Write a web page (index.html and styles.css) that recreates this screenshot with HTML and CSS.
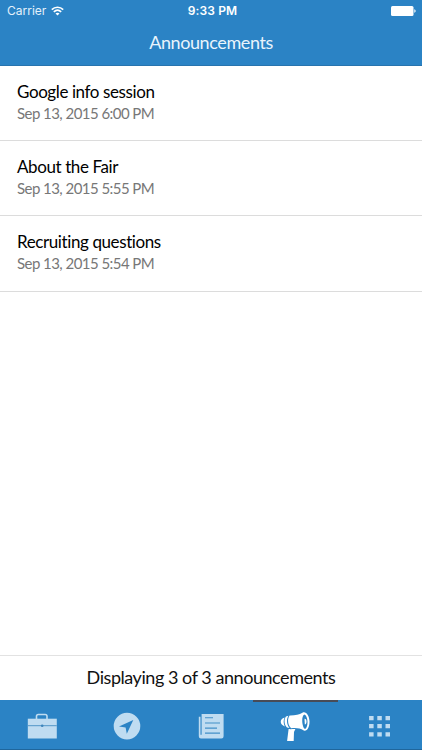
FILE: index.html
```html
<!DOCTYPE html>
<html lang="en">
<head>
    <meta charset="UTF-8">
    <meta name="viewport" content="width=device-width, initial-scale=1.0">
    <title>Announcements</title>
    <link rel="stylesheet" href="styles.css">
</head>
<body>
    <div class="app">
        <header class="header">
            <div class="status-bar">
                <div class="carrier">
                    <span>Carrier</span>
                    <svg class="wifi" width="13" height="10" viewBox="0 0 13 10" fill="none" stroke="#fff" stroke-width="1.6">
                        <path d="M0.8 3.6C4 0.4 9 0.4 12.2 3.6M2.8 5.9C5 3.8 8 3.8 10.2 5.9"/>
                        <path d="M6.5 9.4L4.5 7.4C5.6 6.4 7.4 6.4 8.5 7.4Z" fill="#fff" stroke="none"/>
                    </svg>
                </div>
                <div class="clock">9:33 PM</div>
                <svg class="battery" width="25" height="10" viewBox="0 0 25 10" fill="#fff">
                    <rect width="22.5" height="10" rx="1.5"/>
                    <path d="M23.3 3.3C25.1 3.8 25.1 6.2 23.3 6.7Z"/>
                </svg>
            </div>
            <h1>Announcements</h1>
        </header>

        <main class="announcements">
            <div class="announcement">
                <h2>Google info session</h2>
                <p>Sep 13, 2015 6:00 PM</p>
            </div>
            <div class="announcement">
                <h2>About the Fair</h2>
                <p>Sep 13, 2015 5:55 PM</p>
            </div>
            <div class="announcement">
                <h2>Recruiting questions</h2>
                <p>Sep 13, 2015 5:54 PM</p>
            </div>
        </main>

        <div class="summary">Displaying 3 of 3 announcements</div>

        <nav class="tab-bar">
            <a class="tab">
                <svg width="30" height="30" viewBox="0 0 30 30">
                    <path d="M9.5 7V4.3Q9.5 2.5 11.3 2.5H18.2Q20 2.5 20 4.3V7" fill="none" stroke="currentColor" stroke-width="1.6"/>
                    <path d="M.8 6.7H29.8V26.5H.8Z" fill="currentColor"/>
                    <path d="M.8 13.7H29.8" stroke="#5295c7" stroke-width="1"/>
                    <circle cx="15.2" cy="13.8" r="1.3" fill="#3e85bb"/>
                </svg>
            </a>
            <a class="tab">
                <svg width="30" height="30" viewBox="0 0 30 30">
                    <path fill="currentColor" fill-rule="evenodd" d="M15 .8A13.3 13.3 0 1 1 15 27.4A13.3 13.3 0 1 1 15 .8ZM21.3 7.9L7 14.5L13.6 15.6L14.8 21.8Z"/>
                </svg>
            </a>
            <a class="tab">
                <svg width="30" height="30" viewBox="0 0 30 30">
                    <path d="M5.6 2H27.6V24.3Q27.6 26.5 25.4 26.5H5Q2.8 26.5 2.8 24.3V4.8H4.5V22.8H5.6Z" fill="currentColor"/>
                    <path d="M9 5.8H17M9 11H24M9 16.1H21M9 21.1H24" stroke="#438fc8" stroke-width="1.1"/>
                </svg>
            </a>
            <a class="tab active">
                <svg width="30" height="30" viewBox="0 0 30 30" fill="currentColor">
                    <path fill-rule="evenodd" d="M9.6 3.4C15 3.5 19.2 2.6 22.4.7C26 -1.2 29.3 3.8 29.5 9.2C29.6 15.2 27.1 19.7 23.8 18.6C20.1 16.2 16 15.8 11.2 16.3C7.8 13.7 7 7 9.6 3.4ZM24.4 2.4C20.9 3.8 22 15.6 25 17C28.5 15.8 28.4 3.9 24.4 2.4Z"/>
                    <path d="M8.4 3.8C6.2 7.3 6.6 12.8 9.5 16.1L7 15.6C4.2 12.7 3.7 7.7 6 4.5ZM4.6 5.4C3.2 8.2 3.4 11.9 4.9 14.4C-.4 12.8-.8 7 4.6 5.4ZM8.6 17C11.2 17.4 13.4 16.8 15.4 17L14 20L13.7 29H7.1Z"/>
                    <path d="M24.5 6.7C27.1 6.4 27.2 12 24.8 12.5Z"/>
                </svg>
            </a>
            <a class="tab">
                <svg width="30" height="30" viewBox="0 0 30 30" fill="currentColor">
                    <path d="M4.1 4H8.6V8.2H4.1ZM12.3 4H16.8V8.2H12.3ZM20.5 4H25V8.2H20.5ZM4.1 12.1H8.6V16.3H4.1ZM12.3 12.1H16.8V16.3H12.3ZM20.5 12.1H25V16.3H20.5ZM4.1 20.3H8.6V24.5H4.1ZM12.3 20.3H16.8V24.5H12.3ZM20.5 20.3H25V24.5H20.5Z"/>
                </svg>
            </a>
        </nav>
    </div>
</body>
</html>
```

FILE: styles.css
```css
* {
    box-sizing: border-box;
    margin: 0;
    padding: 0;
}

body {
    background-color: #fff;
    color: #111;
    font-family: Lato, sans-serif;
}

.app {
    display: flex;
    flex-direction: column;
    height: 100vh;
}

.header {
    height: 66px;
    background-color: #2b83c5;
    border-bottom: 1px solid #2874ae;
    color: #fff;
}

.status-bar {
    display: grid;
    grid-template-columns: 1fr auto 1fr;
    align-items: center;
    height: 21px;
    padding: 0 6px 0 7px;
    font-family: Inter, sans-serif;
    font-size: 12px;
}

.carrier {
    display: flex;
    align-items: center;
    gap: 5px;
    color: #e4f1fb;
}

.clock {
    padding-left: 2px;
    font-weight: 600;
    letter-spacing: 0.15px;
}

.battery {
    justify-self: end;
}

h1 {
    font-size: 18px;
    font-weight: 400;
    letter-spacing: -0.4px;
    line-height: 43px;
    text-align: center;
    color: #e9f4fc;
}

.announcements {
    flex: 1;
}

.announcement {
    height: 75.2px;
    padding: 15px 17px 0;
    border-bottom: 1px solid #dcdcdc;
}

.announcement h2 {
    font-size: 17px;
    font-weight: 400;
    letter-spacing: -0.4px;
    line-height: 22px;
    color: #000;
}

.announcement p {
    font-size: 15px;
    letter-spacing: -0.55px;
    line-height: 21px;
    color: #777;
}

.summary {
    height: 45px;
    border-top: 1px solid #e2e2e2;
    font-size: 18px;
    letter-spacing: -0.45px;
    line-height: 43px;
    text-align: center;
}

.tab-bar {
    display: flex;
    height: 50px;
    background-color: #2b83c5;
    border-bottom: 1px solid #1f669c;
}

.tab {
    display: flex;
    flex: 1;
    justify-content: center;
    padding-top: 10px;
    border-top: 2px solid transparent;
    color: #bfdcf1;
}

.tab.active {
    border-top-color: #484b57;
    color: #fff;
}
```
